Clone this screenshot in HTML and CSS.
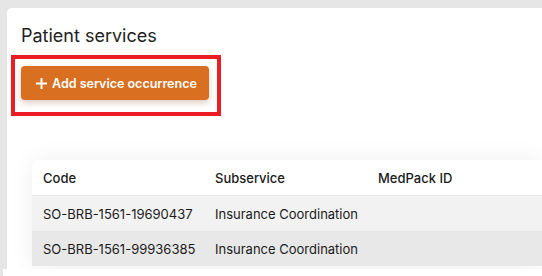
FILE: index.html
```html
<!DOCTYPE html>
<html lang="en">
<head>
  <meta charset="UTF-8">
  <meta name="viewport" content="width=device-width, initial-scale=1.0">
  <title>Patient services</title>
  <link rel="stylesheet" href="styles.css">
</head>
<body>
  <div class="card">
    <h2 class="title">Patient services</h2>

    <div class="action">
      <button class="btn-add" type="button">
        <svg class="plus" width="11" height="11" viewBox="0 0 11 11" aria-hidden="true">
          <path d="M5.5 0v11M0 5.5h11" stroke="#fff" stroke-width="2" fill="none"/>
        </svg>
        Add service occurrence
      </button>
    </div>

    <div class="table-wrap">
      <table class="services">
        <thead>
          <tr>
            <th class="col-code">Code</th>
            <th class="col-sub">Subservice</th>
            <th class="col-med">MedPack ID</th>
            <th></th>
          </tr>
        </thead>
        <tbody>
          <tr>
            <td>SO-BRB-1561-19690437</td>
            <td>Insurance Coordination</td>
            <td></td>
            <td></td>
          </tr>
          <tr>
            <td>SO-BRB-1561-99936385</td>
            <td>Insurance Coordination</td>
            <td></td>
            <td></td>
          </tr>
        </tbody>
      </table>
    </div>
  </div>
  <div class="bottom-bar"></div>
</body>
</html>
```

FILE: styles.css
```css
html, body {
  height: 100%;
  overflow: hidden;
}

body {
  font-family: Inter, "Noto Sans", sans-serif;
  background-color: #e6e6e6;
  color: #1a1a1a;
  margin: 0;
  padding: 8px 0 0 7px;
  box-sizing: border-box;
}

.card {
  background: #fff;
  border-radius: 5px 0 0 0;
  padding: 17px 0 0 14px;
  height: 100%;
  box-sizing: border-box;
  overflow: hidden;
}

.title {
  margin: 0;
  font-size: 18px;
  font-weight: 400;
  line-height: 22px;
  color: #222;
}

.action {
  position: relative;
  display: inline-block;
  margin-top: 19px;
}

/* red highlight frame */
.action::after {
  content: "";
  position: absolute;
  top: -11px;
  left: -10px;
  right: -12px;
  bottom: -16px;
  border: 4px solid #ec1c24;
  pointer-events: none;
}

.btn-add {
  display: flex;
  align-items: center;
  gap: 5px;
  width: 188px;
  height: 34px;
  padding: 0 0 0 15px;
  border: none;
  border-radius: 4px;
  background: #d96f21;
  color: #fff;
  font-family: Inter, "Noto Sans", sans-serif;
  font-size: 12.5px;
  font-weight: 600;
  box-shadow: 0 3px 6px rgba(120, 60, 10, 0.25);
  cursor: pointer;
}

.plus {
  display: block;
}

.table-wrap {
  margin: 60px 0 0 11px;
  border-radius: 6px 0 0 0;
  overflow: hidden;
  box-shadow: 0 0 24px rgba(0, 0, 0, 0.07);
}

.services {
  width: 100%;
  border-collapse: collapse;
  font-size: 13px;
}

.services th,
.services td {
  height: 35px;
  padding: 0 0 0 11px;
  text-align: left;
  white-space: nowrap;
}

.services th {
  font-weight: 500;
  background: #fff;
  border-bottom: 1px solid #e8e8e8;
}

.col-code { width: 161px; }
.col-sub { width: 152px; }
.col-med { width: 140px; }

.services tbody tr:nth-child(odd) td {
  background: #f2f2f2;
}

.services tbody tr:nth-child(even) td {
  background: #e8e8e8;
}

.bottom-bar {
  position: fixed;
  left: 3px;
  right: 0;
  top: 269px;
  bottom: 0;
  background: #fff;
}
```
